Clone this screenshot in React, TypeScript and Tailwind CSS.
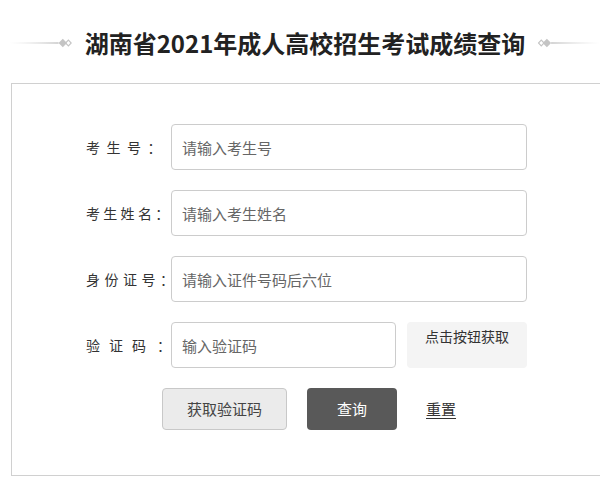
import React from "react";

const font = { fontFamily: '"Noto Sans CJK SC", "Noto Sans", sans-serif' };

function Ornament({ flip }: { flip?: boolean }) {
  return (
    <svg width="66" height="14" viewBox="0 0 66 14" className={flip ? "-scale-x-100" : ""}>
      <defs>
        <linearGradient id={flip ? "lg2" : "lg1"} x1="0" x2="1" y1="0" y2="0">
          <stop offset="0" stopColor="#d6d6d6" stopOpacity="0" />
          <stop offset="1" stopColor="#bdbdbd" />
        </linearGradient>
      </defs>
      <rect x="0" y="6.3" width="52" height="1.4" fill={`url(#${flip ? "lg2" : "lg1"})`} />
      <path d="M52 7 L56.5 2.5 L61 7 L56.5 11.5 Z" fill="#c4c4c4" />
      <path d="M59.5 7 L62.5 3.8 L65.5 7 L62.5 10.2 Z" fill="none" stroke="#c4c4c4" strokeWidth="1.2" />
    </svg>
  );
}

function Field({
  label,
  tracking,
  placeholder,
}: {
  label: string;
  tracking: string;
  placeholder: string;
}) {
  return (
    <div className="flex items-center">
      <div className={`w-[85px] text-[14px] text-[#333] whitespace-nowrap ${tracking}`}>{label}</div>
      <input
        className="h-[46px] w-[356px] rounded-[4px] border border-[#ccc] bg-white px-[10px] text-[15px] text-[#333] outline-none placeholder:text-[#666]"
        placeholder={placeholder}
        style={font}
      />
    </div>
  );
}

export default function App() {
  return (
    <div className="w-[600px] h-[500px] overflow-hidden bg-white" style={font}>
      {/* Title */}
      <div className="flex h-[83px] items-center justify-center pt-[3px] pl-[10px]">
        <Ornament />
        <h1 className="mx-[13px] text-[24px] font-bold text-[#222] leading-none whitespace-nowrap">
          湖南省2021年成人高校招生考试成绩查询
        </h1>
        <Ornament flip />
      </div>

      {/* Form box */}
      <div className="ml-[11px] w-[620px] border border-[#d0d0d0] pt-[40px] pb-[45px] pl-[74px]">
        <div className="flex flex-col gap-[20px]">
          <Field label="考生号：" tracking="tracking-[6.5px]" placeholder="请输入考生号" />
          <Field label="考生姓名：" tracking="tracking-[3.3px]" placeholder="请输入考生姓名" />
          <Field label="身份证号：" tracking="tracking-[4.5px]" placeholder="请输入证件号码后六位" />
          <div className="flex items-center">
            <div className="w-[85px] text-[14px] text-[#333] whitespace-nowrap">
              <span className="tracking-[9px]">验证码</span>
              <span className="ml-[2px]">：</span>
            </div>
            <input
              className="h-[46px] w-[225px] rounded-[4px] border border-[#ccc] bg-white px-[10px] text-[15px] text-[#333] outline-none placeholder:text-[#666]"
              placeholder="输入验证码"
              style={font}
            />
            <button
              className="ml-[11px] h-[46px] w-[120px] self-start rounded-[4px] bg-[#f4f4f4] pt-[4px] text-[14px] text-[#333] flex justify-center items-start"
              style={font}
            >
              点击按钮获取
            </button>
          </div>
        </div>

        <div className="mt-[20px] flex items-center pl-[76px]">
          <button
            className="h-[42px] w-[125px] rounded-[4px] border border-[#c8c8c8] bg-[#ebebeb] text-[15px] text-[#444]"
            style={font}
          >
            获取验证码
          </button>
          <button
            className="ml-[20px] h-[42px] w-[90px] rounded-[4px] bg-[#595959] text-[15px] text-white"
            style={font}
          >
            查询
          </button>
          <a className="ml-[29px] text-[15px] text-[#333] underline underline-offset-[3px]" href="#">
            重置
          </a>
        </div>
      </div>
    </div>
  );
}
